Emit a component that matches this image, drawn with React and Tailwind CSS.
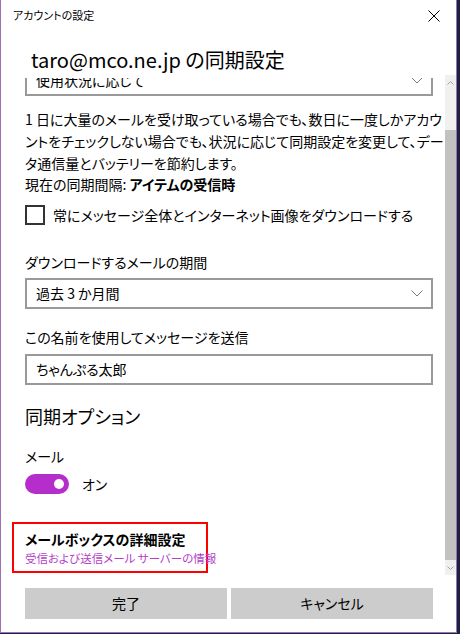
import React from "react";

function Chevron() {
  return (
    <svg width="12" height="7" viewBox="0 0 12 7" className="block">
      <polyline points="0.5,0.5 6,6 11.5,0.5" fill="none" stroke="#7a7a7a" strokeWidth="1" />
    </svg>
  );
}

function SmallArrow({ up }) {
  return (
    <svg width="7" height="4" viewBox="0 0 7 4" className="block">
      <polyline
        points={up ? "0.5,3.5 3.5,0.5 6.5,3.5" : "0.5,0.5 3.5,3.5 6.5,0.5"}
        fill="none"
        stroke="#a3a3a3"
        strokeWidth="1"
      />
    </svg>
  );
}

export default function App() {
  return (
    <div className="w-[460px] h-[634px] bg-[#1b2140] overflow-hidden font-['Noto_Sans_CJK_JP','Noto_Sans',sans-serif] [font-feature-settings:'palt'] text-black">
      <div className="w-[457px] h-[633px] bg-white border-l border-r border-b border-[#a070b3] flex flex-col">
        {/* title bar */}
        <div className="h-[30px] flex items-center justify-between pl-[12px] pr-[16px] shrink-0">
          <span className="text-[11px] leading-[16px] whitespace-nowrap">アカウントの設定</span>
          <svg width="12" height="12" viewBox="0 0 12 12" className="block mt-[2px]">
            <line x1="0.5" y1="0.5" x2="11.5" y2="11.5" stroke="#000" strokeWidth="1" />
            <line x1="11.5" y1="0.5" x2="0.5" y2="11.5" stroke="#000" strokeWidth="1" />
          </svg>
        </div>

        {/* heading */}
        <div className="mt-[16px] pl-[30px] text-[20px] leading-[28px] shrink-0 whitespace-nowrap">
          taro@mco.ne.jp の同期設定
        </div>

        {/* scroll region */}
        <div className="mt-[1px] h-[500px] flex shrink-0">
          <div className="flex-1 mt-[3px] overflow-hidden pl-[24px] pr-[12px] text-[14px] whitespace-nowrap">
            <div className="-mt-[13px] h-[31px] border-2 border-[#999999] flex items-center justify-between pl-[9px] pr-[8px]">
              <span>使用状況に応じて</span>
              <Chevron />
            </div>

            <p className="mt-[12px] leading-[22px]">
              1 日に大量のメールを受け取っている場合でも、数日に一度しかアカウ
              <br />
              ントをチェックしない場合でも、状況に応じて同期設定を変更して、デー
              <br />
              タ通信量とバッテリーを節約します。
            </p>

            <div className="leading-[20px]">
              現在の同期間隔: <span className="font-bold">アイテムの受信時</span>
            </div>

            <div className="mt-[11px] h-[20px] flex items-center gap-[8px]">
              <div className="w-[20px] h-[20px] border-2 border-[#333333] bg-white shrink-0" />
              <span className="leading-[20px]">常にメッセージ全体とインターネット画像をダウンロードする</span>
            </div>

            <div className="mt-[27px] leading-[20px]">ダウンロードするメールの期間</div>
            <div className="mt-[6px] h-[31px] border-2 border-[#999999] flex items-center justify-between pl-[9px] pr-[8px]">
              <span>過去 3 か月間</span>
              <Chevron />
            </div>

            <div className="mt-[18px] leading-[20px]">この名前を使用してメッセージを送信</div>
            <div className="mt-[7px] h-[31px] border-2 border-[#999999] flex items-center pl-[9px]">
              <span>ちゃんぷる太郎</span>
            </div>

            <div className="mt-[17px] text-[18px] leading-[28px]">同期オプション</div>

            <div className="mt-[16px] leading-[20px]">メール</div>
            <div className="mt-[8px] h-[20px] flex items-center gap-[13px]">
              <div className="w-[44px] h-[20px] rounded-full bg-[#b52ecb] flex items-center justify-end pr-[5px] shrink-0">
                <div className="w-[10px] h-[10px] rounded-full bg-white" />
              </div>
              <span className="leading-[20px]">オン</span>
            </div>

            <div className="mt-[28px] -ml-[13px] w-[196px] h-[51px] border-2 border-[#ff0000] pl-[11px] pt-[5px]">
              <div className="leading-[20px] font-bold">メールボックスの詳細設定</div>
              <div className="text-[11.5px] leading-[18px] text-[#b43ec9]">受信および送信メール サーバーの情報</div>
            </div>
          </div>

          {/* scrollbar */}
          <div className="w-[11px] h-[500px] bg-[#f0f0f0] flex flex-col shrink-0">
            <div className="h-[15px] flex items-center justify-center">
              <SmallArrow up />
            </div>
            <div className="h-[40px]" />
            <div className="flex-1 bg-[#c2c2c2]" />
            <div className="h-[15px] flex items-center justify-center">
              <SmallArrow />
            </div>
          </div>
        </div>

        {/* buttons */}
        <div className="mt-[13px] ml-[24px] w-[408px] h-[31px] flex gap-[4px] shrink-0">
          <button className="flex-1 bg-[#cccccc] text-[14px] flex items-center justify-center">完了</button>
          <button className="flex-1 bg-[#cccccc] text-[14px] flex items-center justify-center">キャンセル</button>
        </div>
      </div>
    </div>
  );
}
